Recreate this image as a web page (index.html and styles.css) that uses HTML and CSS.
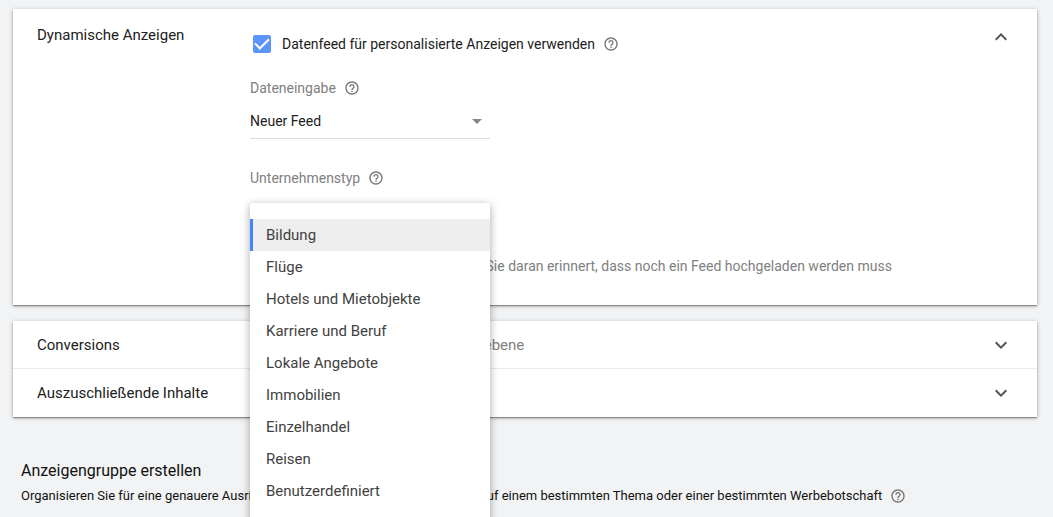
FILE: index.html
```html
<!DOCTYPE html>
<html lang="de">
<head>
<meta charset="utf-8">
<meta name="viewport" content="width=device-width, initial-scale=1">
<title>Kampagne erstellen</title>
<link rel="stylesheet" href="styles.css">
</head>
<body>
<svg width="0" height="0" class="sprite" aria-hidden="true">
  <symbol id="help" viewBox="0 0 24 24"><path d="M11 18h2v-2h-2v2zm1-16C6.480 2 2 6.480 2 12s4.480 10 10 10 10-4.480 10-10S17.520 2 12 2zm0 18c-4.410 0-8-3.590-8-8s3.590-8 8-8 8 3.590 8 8-3.590 8-8 8zm0-14c-2.210 0-4 1.790-4 4h2c0-1.100.9-2 2-2s2 .9 2 2c0 2-3 1.750-3 5h2c0-2.250 3-2.500 3-5 0-2.210-1.790-4-4-4z"/></symbol>
  <symbol id="more" viewBox="0 0 24 24"><path d="M16.590 8.590L12 13.170 7.410 8.590 6 10l6 6 6-6z"/></symbol>
  <symbol id="less" viewBox="0 0 24 24"><path d="M12 8l-6 6 1.410 1.410L12 10.830l4.590 4.580L18 14z"/></symbol>
</svg>
<main class="page">
  <section class="card panel">
    <h2 class="title">Dynamische Anzeigen</h2>
    <div class="fields">
      <div class="check-row">
        <label class="check"><input class="check-box" type="checkbox" checked>Datenfeed für personalisierte Anzeigen verwenden</label>
        <button class="icon-button" type="button" aria-label="Hilfe"><svg class="help"><use href="#help"/></svg></button>
      </div>
      <div class="field">
        <div class="field-label">
          <label for="feed">Dateneingabe</label>
          <button class="icon-button" type="button" aria-label="Hilfe"><svg class="help"><use href="#help"/></svg></button>
        </div>
        <div class="select-wrap">
          <select class="select" id="feed"><option>Neuer Feed</option></select>
        </div>
      </div>
      <div class="field">
        <div class="field-label">
          <span id="type-label">Unternehmenstyp</span>
          <button class="icon-button" type="button" aria-label="Hilfe"><svg class="help"><use href="#help"/></svg></button>
        </div>
        <div class="dropdown">
          <button class="dropdown-button" type="button" aria-haspopup="listbox" aria-expanded="true" aria-labelledby="type-label"></button>
          <div class="menu" role="listbox" aria-labelledby="type-label">
            <button class="option selected" type="button" role="option" aria-selected="true">Bildung</button>
            <button class="option" type="button" role="option">Flüge</button>
            <button class="option" type="button" role="option">Hotels und Mietobjekte</button>
            <button class="option" type="button" role="option">Karriere und Beruf</button>
            <button class="option" type="button" role="option">Lokale Angebote</button>
            <button class="option" type="button" role="option">Immobilien</button>
            <button class="option" type="button" role="option">Einzelhandel</button>
            <button class="option" type="button" role="option">Reisen</button>
            <button class="option" type="button" role="option">Benutzerdefiniert</button>
          </div>
        </div>
      </div>
      <p class="note">Bei der Kampagnenerstellung werden Sie daran erinnert, dass noch ein Feed hochgeladen werden muss</p>
    </div>
    <button class="icon-button toggle" type="button" aria-label="Minimieren"><svg class="chevron"><use href="#less"/></svg></button>
  </section>
  <section class="card">
    <div class="row">
      <h2 class="title">Conversions</h2>
      <p class="summary">Conversion-Zielvorhaben auf Kontoebene</p>
      <button class="icon-button toggle" type="button" aria-label="Conversions maximieren"><svg class="chevron"><use href="#more"/></svg></button>
    </div>
    <div class="row">
      <h2 class="title">Auszuschließende Inhalte</h2>
      <p class="summary">Standardanzeigeneinstellungen</p>
      <button class="icon-button toggle" type="button" aria-label="Inhalte maximieren"><svg class="chevron"><use href="#more"/></svg></button>
    </div>
  </section>
  <section class="group">
    <h1 class="group-title">Anzeigengruppe erstellen</h1>
    <div class="group-text">
      <p>Organisieren Sie für eine genauere Ausrichtung die Anzeigengruppen basierend auf einem bestimmten Thema oder einer bestimmten Werbebotschaft</p>
      <button class="icon-button" type="button" aria-label="Hilfe"><svg class="help"><use href="#help"/></svg></button>
    </div>
  </section>
</main>
</body>
</html>
```
FILE: styles.css
```css
* { box-sizing: border-box; }
body, h1, h2, p { margin: 0; font-weight: 400; }
body { background: #f1f3f4; color: #212121; font: 14px/20px Roboto, sans-serif; }
button, select { font: inherit; color: inherit; border: 0; padding: 0; background: none; }
button { cursor: pointer; }
.sprite { position: absolute; }
.page { height: 100vh; overflow: hidden; padding: 9px 16px 0 13px; }
.card {
  background: #fff;
  margin-bottom: 16px;
  box-shadow: 0 1px 1px rgba(0,0,0,.3), 0 1px 4px rgba(0,0,0,.3);
}
.panel, .row { display: grid; grid-template-columns: 213px 1fr 24px; padding: 0 24px; }
.panel { padding-top: 16px; padding-bottom: 29px; }
.title { font-size: 15px; }
.icon-button { display: flex; color: #757575; }
.help { width: 16px; height: 16px; fill: currentColor; }
.chevron { width: 24px; height: 24px; fill: #50565c; }
.check-row, .check, .field-label, .group-text { display: flex; align-items: center; gap: 8px; }
.check-row { padding: 9px 0 8px 3px; }
.check { gap: 11px; }
.check-box {
  appearance: none; width: 18px; height: 18px; margin: 0; border-radius: 2px;
  background: #5c95f7; display: grid; place-items: center;
}
.check-box::before {
  content: ""; width: 12px; height: 6px; margin-bottom: 4px;
  border: solid #fff; border-width: 0 0 2px 2px; rotate: -45deg;
}
.field { margin-top: 16px; width: 240px; }
.field-label { color: #808080; height: 20px; margin-top: 16px; }
.select-wrap { display: grid; align-items: center; margin: 6px 0 29px; }
.select-wrap::after {
  content: ""; grid-area: 1 / 1; justify-self: end; margin-right: 8px; pointer-events: none;
  border: 5px solid transparent; border-top-color: #868686; border-bottom: 0;
}
.select { grid-area: 1 / 1; appearance: none; width: 100%; height: 35px; border-bottom: 1px solid #dadce0; }
.dropdown { position: relative; height: 40px; margin-top: 15px; }
.dropdown-button { width: 100%; height: 36px; border-bottom: 1px solid #dadce0; }
.menu {
  position: absolute; top: 0; left: 0; z-index: 1; width: 100%; padding: 16px 0;
  background: #fff; box-shadow: 0 2px 8px rgba(0,0,0,.35); border-radius: 2px;
}
.option {
  display: block; width: 100%; height: 32px; padding-left: 13px; text-align: left;
  border-left: 3px solid transparent; font-size: 15px; color: #424242;
}
.selected { background: #eee; border-left-color: #4285f4; }
.note { color: #808080; margin-top: 13px; white-space: nowrap; }
.row { height: 48px; align-items: center; }
.row + .row { box-shadow: 0 -1px 0 #e8eaed; }
.summary { font-size: 15px; color: #808080; }
.group { padding: 28px 8px; }
.group-title { font-size: 16px; line-height: 20px; color: #111; }
.group-text { font-size: 13px; color: #111; margin-top: 5px; }
```
